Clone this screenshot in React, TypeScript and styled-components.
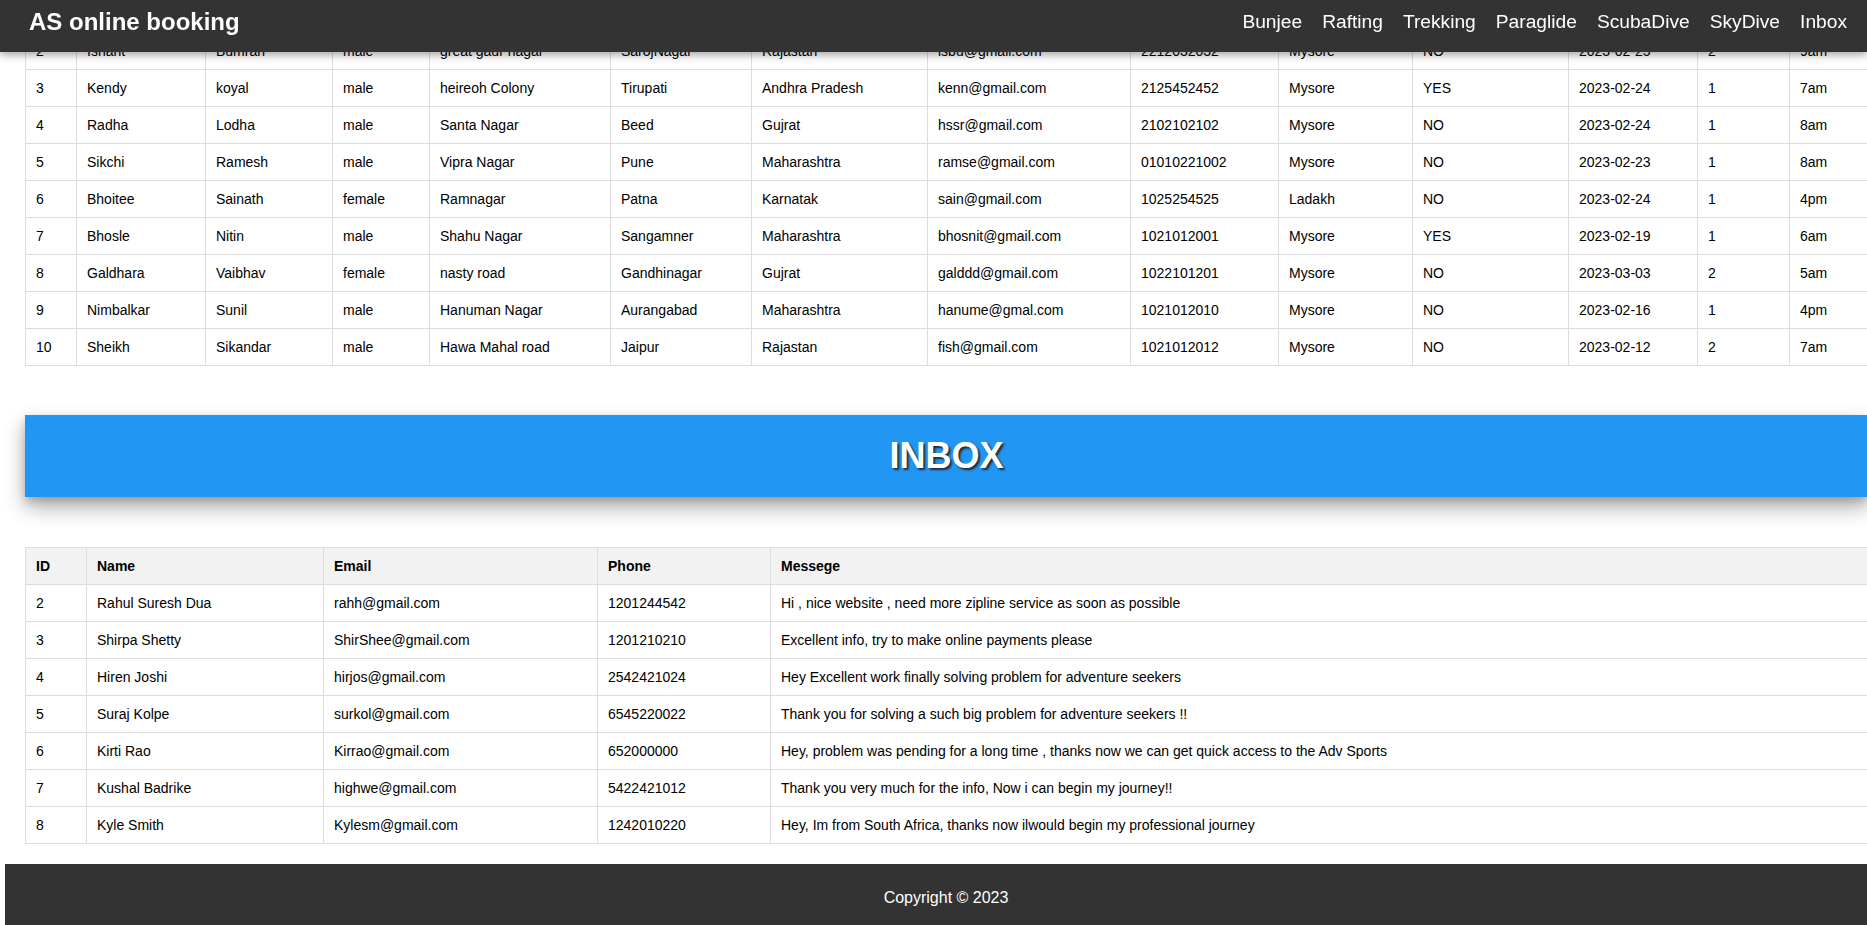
import React from "react";
import styled, { createGlobalStyle } from "styled-components";

const GlobalStyle = createGlobalStyle`
  html, body {
    margin: 0;
    padding: 0;
    overflow: hidden;
    background: #fff;
  }
  body {
    font-family: "Liberation Sans", Arial, sans-serif;
    color: #000;
  }
  * { box-sizing: border-box; }
`;

const Navbar = styled.nav`
  position: fixed;
  top: 0;
  left: 0;
  right: 0;
  height: 52px;
  padding: 0 20px 8px 29px;
  background: #333;
  display: flex;
  align-items: center;
  justify-content: space-between;
  box-shadow: 0 3px 8px rgba(0, 0, 0, 0.35);
  z-index: 10;
`;

const Brand = styled.span`
  color: #fff;
  font-size: 24px;
  font-weight: bold;
`;

const NavLinks = styled.div`
  display: flex;
  gap: 20px;
`;

const NavLink = styled.a`
  color: #fff;
  font-size: 19.2px;
  text-decoration: none;
`;

const Content = styled.div`
  width: 1882px;
  margin-left: 5px;
`;

const Main = styled.main`
  padding: 32px 0 0 20px;
`;

const Table = styled.table<{ $width: number }>`
  width: ${(p) => p.$width}px;
  border-collapse: collapse;
  table-layout: fixed;
  font-size: 14px;
`;

const Th = styled.th`
  background: #f2f2f2;
  border: 1px solid #ddd;
  padding: 10px;
  text-align: left;
  font-weight: bold;
  white-space: nowrap;
`;

const Td = styled.td`
  border: 1px solid #ddd;
  padding: 10px;
  text-align: left;
  white-space: nowrap;
  overflow: hidden;
`;

const Banner = styled.section`
  margin: 49px 19px 50px 0;
  height: 82px;
  background: #2196f3;
  display: flex;
  align-items: center;
  justify-content: center;
  box-shadow: 0 10px 20px rgba(0, 0, 0, 0.33), 0 4px 8px rgba(0, 0, 0, 0.15);
`;

const BannerTitle = styled.h2`
  margin: 0;
  color: #fff;
  font-size: 36px;
  font-weight: bold;
  text-shadow: 2px 2px 2px rgba(40, 30, 30, 0.9);
`;

const Footer = styled.footer`
  margin-top: 20px;
  background: #333;
  color: #fff;
  text-align: center;
  padding: 25px 0;
  font-size: 16px;
`;

const bookingCols = [51, 129, 127, 97, 181, 141, 176, 203, 148, 134, 156, 129, 92, 98];

const bookings: string[][] = [
  ["2", "Ishant", "Bumrah", "male", "great gaur nagar", "SarojNagar", "Rajastan", "isbu@gmail.com", "2212032032", "Mysore", "NO", "2023-02-25", "2", "9am"],
  ["3", "Kendy", "koyal", "male", "heireoh Colony", "Tirupati", "Andhra Pradesh", "kenn@gmail.com", "2125452452", "Mysore", "YES", "2023-02-24", "1", "7am"],
  ["4", "Radha", "Lodha", "male", "Santa Nagar", "Beed", "Gujrat", "hssr@gmail.com", "2102102102", "Mysore", "NO", "2023-02-24", "1", "8am"],
  ["5", "Sikchi", "Ramesh", "male", "Vipra Nagar", "Pune", "Maharashtra", "ramse@gmail.com", "01010221002", "Mysore", "NO", "2023-02-23", "1", "8am"],
  ["6", "Bhoitee", "Sainath", "female", "Ramnagar", "Patna", "Karnatak", "sain@gmail.com", "1025254525", "Ladakh", "NO", "2023-02-24", "1", "4pm"],
  ["7", "Bhosle", "Nitin", "male", "Shahu Nagar", "Sangamner", "Maharashtra", "bhosnit@gmail.com", "1021012001", "Mysore", "YES", "2023-02-19", "1", "6am"],
  ["8", "Galdhara", "Vaibhav", "female", "nasty road", "Gandhinagar", "Gujrat", "galddd@gmail.com", "1022101201", "Mysore", "NO", "2023-03-03", "2", "5am"],
  ["9", "Nimbalkar", "Sunil", "male", "Hanuman Nagar", "Aurangabad", "Maharashtra", "hanume@gmal.com", "1021012010", "Mysore", "NO", "2023-02-16", "1", "4pm"],
  ["10", "Sheikh", "Sikandar", "male", "Hawa Mahal road", "Jaipur", "Rajastan", "fish@gmail.com", "1021012012", "Mysore", "NO", "2023-02-12", "2", "7am"],
];

const inboxCols = [61, 237, 274, 173, 1117];
const inboxHead = ["ID", "Name", "Email", "Phone", "Messege"];

const messages: string[][] = [
  ["2", "Rahul Suresh Dua", "rahh@gmail.com", "1201244542", "Hi , nice website , need more zipline service as soon as possible"],
  ["3", "Shirpa Shetty", "ShirShee@gmail.com", "1201210210", "Excellent info, try to make online payments please"],
  ["4", "Hiren Joshi", "hirjos@gmail.com", "2542421024", "Hey Excellent work finally solving problem for adventure seekers"],
  ["5", "Suraj Kolpe", "surkol@gmail.com", "6545220022", "Thank you for solving a such big problem for adventure seekers !!"],
  ["6", "Kirti Rao", "Kirrao@gmail.com", "652000000", "Hey, problem was pending for a long time , thanks now we can get quick access to the Adv Sports"],
  ["7", "Kushal Badrike", "highwe@gmail.com", "5422421012", "Thank you very much for the info, Now i can begin my journey!!"],
  ["8", "Kyle Smith", "Kylesm@gmail.com", "1242010220", "Hey, Im from South Africa, thanks now ilwould begin my professional journey"],
];

const navItems = ["Bunjee", "Rafting", "Trekking", "Paraglide", "ScubaDive", "SkyDive", "Inbox"];

const sum = (a: number[]) => a.reduce((x, y) => x + y, 0);

export default function App() {
  return (
    <>
      <GlobalStyle />
      <Navbar>
        <Brand>AS online booking</Brand>
        <NavLinks>
          {navItems.map((n) => (
            <NavLink key={n} href="#">
              {n}
            </NavLink>
          ))}
        </NavLinks>
      </Navbar>
      <Content>
        <Main>
          <Table $width={sum(bookingCols)}>
            <colgroup>
              {bookingCols.map((w, i) => (
                <col key={i} style={{ width: w }} />
              ))}
            </colgroup>
            <tbody>
              {bookings.map((row) => (
                <tr key={row[0]}>
                  {row.map((c, i) => (
                    <Td key={i}>{c}</Td>
                  ))}
                </tr>
              ))}
            </tbody>
          </Table>

          <Banner>
            <BannerTitle>INBOX</BannerTitle>
          </Banner>

          <Table $width={sum(inboxCols)}>
            <colgroup>
              {inboxCols.map((w, i) => (
                <col key={i} style={{ width: w }} />
              ))}
            </colgroup>
            <thead>
              <tr>
                {inboxHead.map((h) => (
                  <Th key={h}>{h}</Th>
                ))}
              </tr>
            </thead>
            <tbody>
              {messages.map((row) => (
                <tr key={row[0]}>
                  {row.map((c, i) => (
                    <Td key={i}>{c}</Td>
                  ))}
                </tr>
              ))}
            </tbody>
          </Table>
        </Main>
        <Footer>Copyright © 2023</Footer>
      </Content>
    </>
  );
}
